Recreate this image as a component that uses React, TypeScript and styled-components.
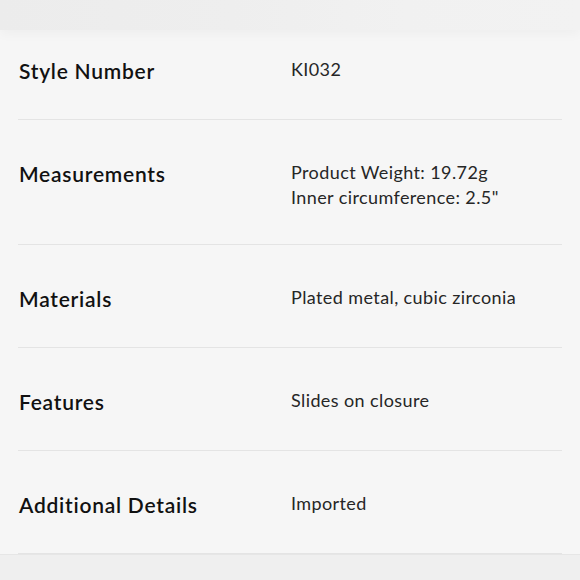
import React from "react";
import styled, { createGlobalStyle } from "styled-components";

const Global = createGlobalStyle`
  html, body { margin: 0; padding: 0; background: #f6f6f6; }
  body { font-family: "Lato", "Liberation Sans", sans-serif; }
`;

const Page = styled.div`
  width: 580px;
  height: 580px;
  display: flex;
  flex-direction: column;
  background: #f6f6f6;
  overflow: hidden;
`;

const TopBand = styled.div`
  flex: 0 0 30px;
  background: linear-gradient(90deg, #ececec 0%, #eeeeee 40%, #f1f1f1 70%, #f2f2f2 100%);
  box-shadow: 0 4px 12px rgba(0, 0, 0, 0.035);
  position: relative;
  z-index: 1;
`;

const List = styled.div`
  flex: 1 1 auto;
  padding: 0 18px;
`;

const Row = styled.div`
  display: grid;
  grid-template-columns: 272px 1fr;
  align-items: start;
  padding: 40px 0 34px 1px;
  border-bottom: 1px solid #e4e4e4;
  &:first-child { padding-top: 27px; }
`;

const Label = styled.div`
  font-size: 21px;
  line-height: 28px;
  font-weight: 600;
  color: #111;
  letter-spacing: 0.75px;
`;

const Value = styled.div`
  font-size: 18px;
  line-height: 25px;
  color: #262626;
  letter-spacing: 0.4px;
`;

const BottomBand = styled.div`
  flex: 0 0 28px;
  background: #efefef;
  border-top: 1px solid #e6e6e6;
`;

const rows: { label: string; values: string[] }[] = [
  { label: "Style Number", values: ["KI032"] },
  { label: "Measurements", values: ["Product Weight: 19.72g", 'Inner circumference: 2.5"'] },
  { label: "Materials", values: ["Plated metal, cubic zirconia"] },
  { label: "Features", values: ["Slides on closure"] },
  { label: "Additional Details", values: ["Imported"] },
];

export default function App() {
  return (
    <Page>
      <Global />
      <TopBand />
      <List>
        {rows.map((r) => (
          <Row key={r.label}>
            <Label>{r.label}</Label>
            <Value>
              {r.values.map((v) => (
                <div key={v}>{v}</div>
              ))}
            </Value>
          </Row>
        ))}
      </List>
      <BottomBand />
    </Page>
  );
}
